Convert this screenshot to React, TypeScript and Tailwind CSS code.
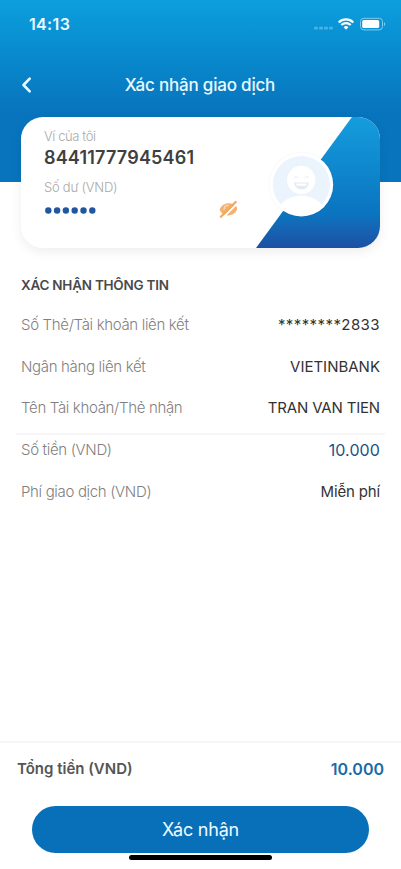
function StatusBar() {
  return (
    <div className="flex h-[49px] items-center justify-between pl-[29px] pr-[15px]">
      <span className="pb-px text-[16px] leading-none font-semibold tracking-[0.35px] text-[#eafaff]">14:13</span>
      <svg className="-mt-px" width="74" height="16" viewBox="312 16.5 74 16">
        <g fill="#48b2e3">
          <rect x="314" y="27.3" width="4" height="2.8" rx="1" />
          <rect x="319" y="27.3" width="4" height="2.8" rx="1" />
          <rect x="324" y="27.3" width="4" height="2.8" rx="1" />
          <rect x="329" y="27.3" width="4" height="2.8" rx="1" />
        </g>
        <g fill="none" stroke="#fff" strokeWidth="2.1">
          <path d="M338.7 22.9a10.4 10.4 0 0 1 14.6 0" />
          <path d="M341.3 25.6a6.6 6.6 0 0 1 9.4 0" />
        </g>
        <path d="M343.6 27.8a3.4 3.4 0 0 1 4.8 0L346 30.3z" fill="#fff" />
        <rect x="360.5" y="18.8" width="22" height="11.6" rx="3.3" fill="none" stroke="#7dcbee" />
        <rect x="362.2" y="20.6" width="17" height="8" rx="1.6" fill="#fff" />
        <path d="M384 22.7c1.8.6 1.8 3.2 0 3.8z" fill="#7dcbee" />
      </svg>
    </div>
  );
}

function Avatar() {
  return (
    <svg className="absolute top-[33px] left-[246px]" width="69" height="69" viewBox="-34.3 -34.6 69 69">
      <defs>
        <clipPath id="face">
          <circle r="28.7" />
        </clipPath>
      </defs>
      <circle r="33" fill="#000" opacity=".025" />
      <circle r="31.9" fill="#fff" />
      <g clipPath="url(#face)">
        <circle r="28.7" fill="#ebf3fc" />
        <circle cy="-4.6" r="14.2" fill="#fff" />
        <ellipse cy="32" rx="25" ry="21" fill="#fff" />
      </g>
      <path d="M-7.5-6.8q2.2-2.4 4.4 0M3.2-6.8q2.2-2.4 4.4 0" fill="none" stroke="#e9edf2" strokeWidth="1" />
      <path d="M-7-2.1H7.4C7.4 7.2-7 7.2-7-2.1z" fill="#e3eaf2" />
      <path d="M-5.2-1.2H5.6l-.6 2.3H-4.6z" fill="#fff" />
    </svg>
  );
}

function HiddenEye() {
  return (
    <svg className="absolute top-[83px] left-[197px]" width="20" height="18" viewBox="218 200 20 18">
      <path d="M219.6 209.8c1.6-6.6 12-9.6 17.6-2.4.2 9-14.400 11.200-17.600 2.400z" fill="#f2b273" />
      <path d="M224.200 209.600c-.6-2.600 1.600-4.600 4.400-4.300" fill="none" stroke="#fbe0c4" strokeWidth="1.200" />
      <path d="M222.500 218.100L237.800 202.900" stroke="#fff" strokeWidth="1.900" />
      <path d="M220.900 216.700L235.600 202" stroke="#f0a75e" strokeWidth="2.200" strokeLinecap="round" />
    </svg>
  );
}

function WalletCard() {
  return (
    <section className="relative mx-[21px] h-[131px] overflow-hidden rounded-[22px] bg-white pl-[23px]">
      <div className="absolute inset-y-0 right-0 w-[124px] bg-linear-to-b from-[#159ddd] via-[#0b73bf] via-75% to-[#1b50a3] [clip-path:polygon(77.4%_0,100%_0,100%_100%,0_100%)]" />
      <Avatar />
      <HiddenEye />
      <p className="pt-[10px] text-[13px] leading-[18px] font-light tracking-[-0.4px] text-[#a9a9a9]">Ví của tôi</p>
      <p className="pt-[2px] text-[18px] leading-[22px] font-semibold tracking-[0.18px] text-[#404040]">84411777945461</p>
      <p className="pt-[9px] text-[13px] leading-[18px] font-light tracking-[-0.25px] text-[#a9a9a9]">Số dư (VND)</p>
      <svg className="mt-[11px]" width="53" height="7" viewBox="0 0 53 7" fill="#20579f">
        {[0, 1, 2, 3, 4, 5].map((n) => (
          <circle key={n} cx={4.3 + n * 8.8} cy="3.5" r="3.2" />
        ))}
      </svg>
    </section>
  );
}

const transfer = [
  { label: "Số Thẻ/Tài khoản liên kết", value: "********2833", style: "text-[15px] tracking-[0.42px] text-[#333333]" },
  { label: "Ngân hàng liên kết", value: "VIETINBANK", style: "text-[15px] text-[#333333]" },
  { label: "Tên Tài khoản/Thẻ nhận", value: "TRAN VAN TIEN", style: "text-[15px] tracking-[-0.17px] text-[#333333]" },
];

const amounts = [
  { label: "Số tiền (VND)", value: "10.000", style: "pb-px text-[16px] tracking-[0.1px] text-[#1f5283]" },
  { label: "Phí giao dịch (VND)", value: "Miễn phí", style: "text-[15px] tracking-[-0.15px] text-[#333333]" },
];

function Row({ label, value, style }: { label: string; value: string; style: string }) {
  return (
    <div className="flex h-[41.8px] items-center justify-between px-[21px] leading-[20px]">
      <span className="text-[15px] font-light tracking-[-0.33px] text-[#7f7f7f]">{label}</span>
      <span className={style}>{value}</span>
    </div>
  );
}

export default function App() {
  return (
    <main className="flex h-[869px] w-[401px] flex-col overflow-hidden bg-white font-['Inter','Liberation_Sans',sans-serif]">
      <header className="h-[182px] shrink-0 bg-linear-to-b from-[#0c9fdd] via-[#0874bd] via-62% to-[#0874bd]">
        <StatusBar />
        <div className="flex h-[68px] items-center pt-[4px]">
          <button className="w-[40px] pl-[20px]" aria-label="Quay lại">
            <svg width="14" height="18" viewBox="0 0 14 18" fill="none" stroke="#eafaff" strokeWidth="2.6" strokeLinecap="round" strokeLinejoin="round">
              <path d="M9.7 2.6L3.5 9l6.2 6.4" />
            </svg>
          </button>
          <h1 className="flex-1 pr-[41px] text-center text-[17px] leading-[22px] font-medium tracking-[-0.2px] text-[#eafaff]">Xác nhận giao dịch</h1>
        </div>
        <div className="relative">
          <div className="absolute inset-x-[21px] top-0 h-[131px] rounded-[22px] shadow-[0_4px_12px_rgba(0,0,0,0.07)]" />
          <WalletCard />
        </div>
      </header>

      <section className="mt-[93px] flex-1">
        <h2 className="pl-[21px] text-[13.5px] leading-[20px] font-semibold tracking-[-0.25px] text-[#4a4a4a]">XÁC NHẬN THÔNG TIN</h2>
        <div className="pt-[9px]">
          {transfer.map((row) => (
            <Row key={row.label} {...row} />
          ))}
          <div className="mx-[16px] mt-[4px] -mb-[6px] h-[2px] bg-[#f6f6f6]" />
          {amounts.map((row) => (
            <Row key={row.label} {...row} />
          ))}
        </div>
      </section>

      <footer className="h-[128px] shrink-0 border-t-2 border-[#f6f6f6]">
        <div className="flex h-[52px] items-center justify-between px-[17px] font-semibold">
          <span className="text-[15px] text-[#555555]">Tổng tiền (VND)</span>
          <span className="pb-px text-[16px] text-[#176ba6]">10.000</span>
        </div>
        <button className="mx-[32px] mt-[11px] flex h-[47px] w-[337px] items-center justify-center rounded-full bg-[#0870b9] text-[18px] tracking-[-0.2px] text-[#f0fbff]">Xác nhận</button>
        <div className="mx-auto mt-[2px] h-[5px] w-[143px] rounded-full bg-black" />
      </footer>
    </main>
  );
}
